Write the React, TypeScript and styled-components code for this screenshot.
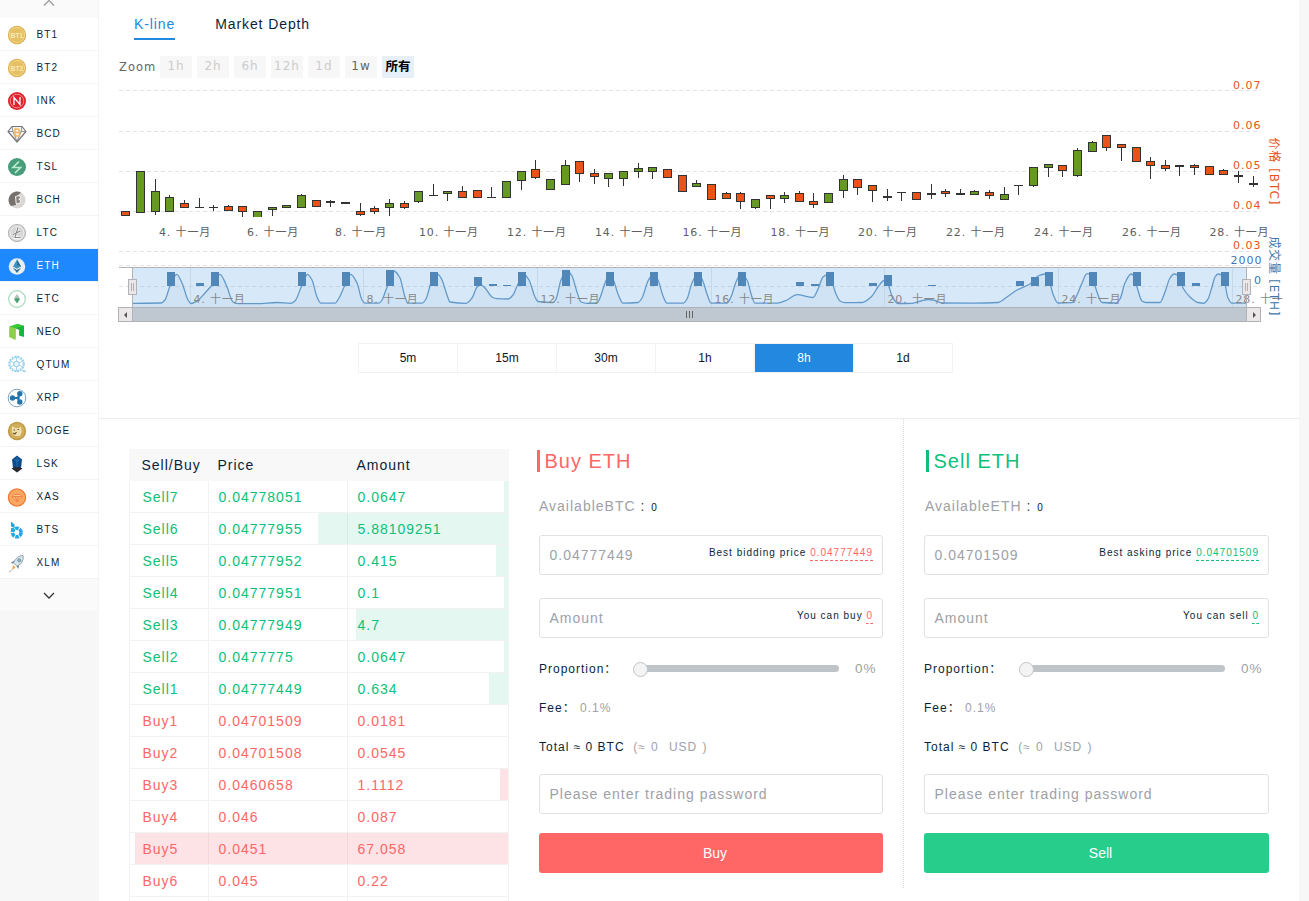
import React from "react";
import styled, { createGlobalStyle, css } from "styled-components";

const GREEN = "#0cc07a";
const RED = "#ff6666";
const BLUE = "#2288e0";

const GlobalStyle = createGlobalStyle`
  * { box-sizing: border-box; }
  body {
    margin: 0;
    background: #f7f7f7;
    color: #0b1f3a;
    font-family: "Liberation Sans", "Noto Sans CJK SC", sans-serif;
    letter-spacing: 1px;
  }
`;

const Page = styled.div`
  display: flex;
  width: 1309px;
  height: 901px;
  overflow: hidden;
`;

/* ---------- sidebar ---------- */

const Sidebar = styled.nav`
  width: 99px;
  flex: none;
`;

const SidebarList = styled.div`
  border-right: 1px solid #f4f4f4;
  background: #fff;
`;

const ScrollCell = styled.div<{ $top?: boolean }>`
  height: ${(p) => (p.$top ? 18 : 32)}px;
  background: #fafafa;
  display: flex;
  justify-content: center;
  align-items: ${(p) => (p.$top ? "flex-start" : "center")};
  svg { display: block; }
`;

const CoinRow = styled.div<{ $active?: boolean }>`
  height: 33px;
  padding: 1px 0 0 7px;
  display: flex;
  align-items: center;
  gap: 9.500px;
  font-size: 10px;
  letter-spacing: 1.1px;
  background: #fff;
  border-bottom: 1px solid #f4f4f4;
  ${(p) =>
    p.$active &&
    css`
      background: #1e88ff;
      background-clip: padding-box;
      color: #fff;
    `}
  svg { flex: none; }
`;

const gold = (label: string) => (
  <>
    <circle cx="10" cy="10" r="9.2" fill="#dfb04c" />
    <circle cx="10" cy="10" r="7.6" fill="#e5c164" stroke="#f1d88c" strokeWidth="1" />
    <text x="10" y="12.5" fontSize="6.500" fontWeight="700" textAnchor="middle" letterSpacing="0" fill="#f8e9b8">{label}</text>
  </>
);

const coinArt: Record<string, React.ReactNode> = {
  BT1: gold("BT1"),
  BT2: gold("BT2"),
  INK: (
    <>
      <circle cx="10" cy="10" r="9" fill="#e0202b" />
      <circle cx="10" cy="10" r="6.8" fill="none" stroke="#f7b6b8" strokeWidth=".7" />
      <path d="M7 14V6.500l6 7V6" stroke="#fff" strokeWidth="1.3" fill="none" />
    </>
  ),
  BCD: (
    <>
      <path d="M5 2.5h10l4 5-9 10.5L1 7.500z" fill="#f5f5f5" stroke="#777" strokeWidth="1.2" strokeLinejoin="round" />
      <path d="M1 7.500h5l4 10 4-10h5M6 7.500L5 2.500M14 7.500l1-5" stroke="#777" strokeWidth=".8" fill="none" />
      <path d="M8 5h2.500q1.800 0 1.800 1.700T10.500 8.500H8zM8 8.500h3q1.800 0 1.800 1.700T11 12H8z" fill="none" stroke="#f3b25a" strokeWidth="1.400" />
    </>
  ),
  TSL: (
    <>
      <circle cx="10" cy="10" r="9" fill="#479d79" />
      <path d="M12 4.500L6 10.500h7.500L8 16" stroke="#b7ecd0" strokeWidth="1.700" fill="none" />
    </>
  ),
  BCH: (
    <>
      <circle cx="10" cy="10" r="8.500" fill="#d9d6d4" />
      <path d="M4 16A8.500 8.500 0 0 1 14 2.500L11 5 9 15z" fill="#77716e" />
      <path d="M8.500 6.500l3-.8q2 0 2 1.600t-1.700 2q2 .3 1.900 2T11.500 13.500l-2.300.5z" fill="#8b8683" stroke="#fff" strokeWidth=".9" />
    </>
  ),
  LTC: (
    <>
      <circle cx="10" cy="10" r="8.600" fill="#d6d6d6" stroke="#a5a5a5" strokeWidth=".8" />
      <circle cx="10" cy="10" r="6.800" fill="none" stroke="#f1f1f1" strokeWidth=".8" />
      <path d="M11 4.500L8 14.500h5.500M6 11.500l7.500-3.500" stroke="#fff" strokeWidth="2.400" fill="none" />
      <path d="M11 4.500L8 14.500h5.500M6 11.500l7.500-3.500" stroke="#888" strokeWidth="1.100" fill="none" />
    </>
  ),
  ETH: (
    <>
      <circle cx="10" cy="10.500" r="8.300" fill="#e8edf0" />
      <path d="M10 3.500l4 7-4 2.300-4-2.300z" fill="#4492b8" />
      <path d="M10 3.500l4 7-4-1.600zM6 11.700l4 2.300 4-2.300-4 5.300z" fill="#2a6d94" />
    </>
  ),
  ETC: (
    <>
      <circle cx="10" cy="10" r="8.300" fill="#fff" stroke="#a4d8b8" strokeWidth="1.200" />
      <path d="M10 5l3 4.300L10 11 7 9.300z" fill="#b5c2b9" />
      <path d="M7 10l3-1 3 1-3 4.500z" fill="#4aa06e" />
    </>
  ),
  NEO: (
    <>
      <path d="M2.500 4.500l8-2.800 6.500 2v11l-5-1.500V7.500L8.500 6.200v10.500L2.500 15z" fill="#38c934" />
      <path d="M2.500 4.500l6 1.700v12L2.500 15z" fill="#8fd04a" />
      <path d="M8.500 6.200l8.500-2.500v11l-4.500-1V8z" fill="#12b83c" />
    </>
  ),
  QTUM: (
    <>
      <circle cx="9.500" cy="9" r="7.500" fill="none" stroke="#8ccbe4" strokeWidth="1.400" strokeDasharray="2 1" />
      <path d="M3 6l6.500-4L16 6v6l-6.500 4L3 12zM3 6l13 6M16 6L3 12M9.500 2v14" stroke="#9dd3e8" strokeWidth=".9" fill="none" />
      <circle cx="9.500" cy="9" r="2.800" fill="#e9f6fb" stroke="#8ccbe4" />
      <path d="M15.500 15.500l3 1" stroke="#8ccbe4" strokeWidth="1.500" />
    </>
  ),
  XRP: (
    <>
      <circle cx="10" cy="10" r="8.800" fill="#fff" stroke="#7fa3c4" strokeWidth="1" />
      <path d="M6 10h5l2-4.500M11 10l2 4.500" stroke="#2274ab" strokeWidth="1.800" fill="none" />
      <circle cx="5.500" cy="10" r="2.700" fill="#2274ab" />
      <circle cx="12.800" cy="5.800" r="2.700" fill="#2274ab" />
      <circle cx="12.800" cy="14" r="2.700" fill="#2274ab" />
      <circle cx="11" cy="10" r="1.700" fill="#2274ab" />
    </>
  ),
  DOGE: (
    <>
      <circle cx="10" cy="10" r="9.200" fill="#bf9a45" />
      <circle cx="10" cy="10" r="7.700" fill="#d1ae5c" />
      <path d="M5 5l3 2h4l2-1 .7 5-1.700 4H8l-3-3z" fill="#f0dfae" />
      <path d="M6.500 9h1.500M10.500 8.500H12M6 12l2 1 1.500-2" stroke="#69501f" strokeWidth="1.200" fill="none" />
    </>
  ),
  LSK: (
    <>
      <path d="M10 1.500l5 4-1 8.500H6L5 5.500z" fill="#0d4a8c" />
      <path d="M10 3v11M7.500 5l2.500 3 2.500-3" stroke="#1d6fb0" strokeWidth="1.100" fill="none" />
      <path d="M4.500 14.500L8 13h4l3.500 1.500L10 18.500z" fill="#2b2b33" />
    </>
  ),
  XAS: (
    <>
      <circle cx="10" cy="10.500" r="8.600" fill="#f9a862" stroke="#f07a35" strokeWidth="1.300" />
      <path d="M7 7.500h6L15 9.500 10 15 5 9.500zM5 9.500h10M8 9.500l2 5 2-5" stroke="#f0763c" strokeWidth=".8" fill="#fcc38d" />
    </>
  ),
  BTS: (
    <>
      <path d="M4 1.500l3.500 3v3.500L4 6.500zM4 8l3.500.5v3L4 11z" fill="#1ba5e5" />
      <circle cx="9.800" cy="12.500" r="4.300" fill="none" stroke="#1eaae8" strokeWidth="3.600" strokeDasharray="3.600 .9" />
    </>
  ),
  XLM: (
    <>
      <path d="M16 2.500q-6 0-9.500 7L10 13.500q6-3 6.300-8z" fill="#dbe6ec" stroke="#879aa6" strokeWidth=".9" />
      <circle cx="12.200" cy="7.300" r="1.600" fill="#90b9cf" stroke="#60798a" strokeWidth=".6" />
      <path d="M7.500 7.500L4 9.500l2 1.500zM12 12l-.5 4-2-2.500z" fill="#6f8794" />
      <path d="M6 12l2.500 2.500L5 17z" fill="#f2a24a" />
      <path d="M2 19l3-2" stroke="#ccc" strokeWidth="1.500" />
    </>
  ),
};

/* ---------- market / chart ---------- */

const Main = styled.main`
  width: 1200px;
  flex: none;
  background: #fff;
`;

const Market = styled.section`
  height: 419px;
  border-bottom: 1px solid #ececec;
`;

const Tabs = styled.div`
  display: flex;
  gap: 40px;
  padding: 8px 0 0 35px;
`;

const Tab = styled.div<{ $active?: boolean }>`
  height: 32px;
  line-height: 32px;
  font-size: 14px;
  letter-spacing: 0.9px;
  color: ${(p) => (p.$active ? BLUE : "inherit")};
  border-bottom: 2px solid ${(p) => (p.$active ? BLUE : "transparent")};
`;

const ZoomRow = styled.div`
  display: flex;
  gap: 5px;
  padding: 16px 0 0 20px;
  height: 40px;
  font-family: "DejaVu Sans", "Noto Sans CJK SC", sans-serif;
`;

const ZoomLabel = styled.span`
  width: 36px;
  font-size: 11.500px;
  line-height: 22px;
  color: #666;
`;

const ZoomButton = styled.span<{ $state?: "on" | "off" }>`
  width: 32px;
  height: 22px;
  line-height: ${(p) => (p.$state === "on" ? 22 : 20)}px;
  text-align: center;
  font-size: ${(p) => (p.$state === "on" ? 12.5 : 12)}px;
  background: ${(p) => (p.$state === "on" ? "#e7f0f9" : "#f7f7f7")};
  color: ${(p) => (p.$state === "on" ? "#000" : p.$state === "off" ? "#ccc" : "#666")};
  font-weight: ${(p) => (p.$state === "on" ? 700 : 400)};
  letter-spacing: ${(p) => (p.$state === "on" ? 0 : 1)}px;
`;

const ChartSvg = styled.svg`
  display: block;
  font-family: "DejaVu Sans", "Noto Sans CJK SC", sans-serif;
  font-size: 11px;
  letter-spacing: 1px;
`;

const Intervals = styled.div`
  display: flex;
  width: 595px;
  height: 30px;
  margin: 13px 0 0 259px;
  border: 1px solid #f2f2f2;
`;

const Interval = styled.div<{ $active?: boolean }>`
  flex: 1;
  line-height: 28px;
  text-align: center;
  font-size: 12px;
  letter-spacing: 0;
  color: ${(p) => (p.$active ? "#fff" : "#0b1626")};
  background: ${(p) => (p.$active ? BLUE : "transparent")};
  border-right: 1px solid #f2f2f2;
  &:last-child { border-right: 0; }
`;

type Candle = [string, number, number, number, number];

// kind, wick top, body top, body bottom, wick bottom
const candles: Candle[] = [
  ["R", 211, 211, 216, 216], ["G", 171, 171, 213, 213], ["G", 179, 191, 212, 215], ["G", 195, 197, 212, 212],
  ["R", 200, 203, 208, 208], ["D", 198, 207, 208, 208], ["D", 205, 207, 208, 211], ["R", 205, 206, 211, 211],
  ["R", 206, 206, 212, 217], ["G", 211, 211, 219, 219], ["G", 207, 207, 210, 216], ["G", 205, 205, 208, 208],
  ["G", 194, 195, 208, 208], ["R", 200, 200, 207, 207], ["D", 200, 201, 203, 207], ["D", 202, 202, 204, 204],
  ["R", 203, 211, 215, 216], ["R", 206, 208, 212, 214], ["G", 199, 203, 208, 216], ["R", 201, 203, 208, 209],
  ["G", 191, 191, 202, 203], ["D", 184, 195, 196, 196], ["G", 191, 191, 194, 201], ["R", 186, 191, 198, 198],
  ["R", 190, 190, 198, 198], ["D", 187, 197, 198, 198], ["G", 181, 181, 198, 198], ["G", 171, 171, 181, 190],
  ["R", 160, 169, 178, 179], ["G", 179, 179, 190, 190], ["G", 160, 165, 185, 185], ["R", 161, 161, 174, 182],
  ["R", 169, 173, 177, 184], ["G", 173, 173, 179, 187], ["G", 171, 171, 179, 186], ["G", 163, 168, 172, 178],
  ["G", 167, 167, 172, 179], ["R", 169, 169, 178, 178], ["R", 175, 175, 192, 192], ["G", 180, 183, 187, 187],
  ["R", 184, 184, 200, 200], ["R", 192, 193, 199, 199], ["R", 192, 193, 202, 209], ["G", 199, 199, 208, 209],
  ["R", 195, 195, 199, 209], ["G", 192, 195, 199, 203], ["R", 191, 193, 202, 202], ["R", 193, 201, 205, 208],
  ["G", 193, 193, 203, 203], ["G", 175, 179, 191, 198], ["R", 179, 179, 188, 195], ["R", 185, 185, 191, 202],
  ["D", 189, 196, 198, 201], ["D", 192, 192, 193, 201], ["R", 192, 192, 200, 200], ["D", 184, 193, 195, 199],
  ["R", 189, 191, 194, 197], ["D", 189, 193, 195, 195], ["G", 190, 191, 195, 195], ["R", 190, 192, 196, 199],
  ["G", 187, 194, 200, 200], ["D", 185, 185, 186, 195], ["G", 167, 167, 186, 187], ["G", 164, 164, 168, 177],
  ["R", 165, 165, 171, 177], ["G", 148, 150, 176, 177], ["G", 141, 142, 152, 152], ["R", 135, 135, 148, 151],
  ["R", 144, 144, 148, 161], ["R", 147, 147, 162, 162], ["R", 157, 161, 166, 179], ["R", 160, 165, 169, 171],
  ["D", 165, 165, 167, 176], ["R", 164, 165, 168, 175], ["R", 166, 166, 175, 175], ["R", 169, 170, 175, 175],
  ["D", 171, 175, 177, 183], ["D", 176, 183, 185, 187],
];

const volumes: [number, number][] = [
  [167, 272], [196, 283], [211, 272], [298, 272], [342, 272], [386, 270], [430, 272], [474, 277], [489, 284],
  [503, 285], [518, 272], [562, 270], [606, 272], [650, 272], [694, 272], [738, 272], [796, 282], [811, 284],
  [826, 272], [869, 283], [884, 275], [928, 285], [1016, 281], [1031, 277], [1045, 272], [1089, 272],
  [1133, 272], [1177, 272], [1192, 283], [1221, 272],
];

const overview: [number, number][] = [
  [133, 303.3], [161, 303], [165, 300], [170, 286], [176.7, 274.3], [182, 283], [188, 300], [191, 303.5], [197, 301],
  [205, 293], [212, 285], [220, 274.3], [227, 287], [233, 302], [238, 303.7], [257, 303.7], [277, 302.5], [291, 303.3],
  [295, 301], [302, 285], [307.500, 274.3], [312, 280], [317, 297], [321, 303.2], [335, 303.2], [339, 298], [345, 285],
  [350.700, 274.3], [357, 283], [362, 300], [365, 303.2], [379, 303.2], [382, 300], [386, 290], [394, 271], [400, 278],
  [405, 297], [408, 303.2], [422, 303.2], [426, 299], [432, 280], [438, 274.3], [442, 280], [447, 295], [450, 302],
  [466, 303.3], [472, 298], [477, 287], [480, 284.500], [485, 288], [492, 297], [497, 298.700], [508, 299], [513, 295],
  [518, 284], [524, 274.300], [529, 280], [535, 297], [538, 301.500], [553, 302.500], [556, 299], [561, 280], [567, 270.500],
  [572, 276], [577, 292], [581, 302], [587, 303.300], [597, 303], [600, 298], [605, 283], [609.500, 274.500], [613, 279],
  [618, 294], [623, 303.200], [638, 302.500], [642, 298], [648, 281], [653, 274.300], [658, 280], [663, 296], [667, 303.200],
  [683, 303.200], [687, 299], [692, 283], [697.500, 274.300], [702, 279], [707, 294], [711, 303.200], [727, 303.200],
  [731, 297], [736, 282], [741, 274], [747, 280], [752, 297], [755, 303.200], [777, 303.200], [787, 300], [797, 294.700],
  [813, 297.500], [818, 289], [823, 277], [828, 274.300], [832, 282], [836, 294], [840, 301], [845, 302.700], [862, 302.500],
  [872, 296], [878, 287], [884, 280.500], [888, 284], [892, 296], [898, 303.500], [912, 303.300], [921, 301], [928, 299.500],
  [935, 300.500], [942, 303], [973, 303.200], [998, 302.500], [1007, 297], [1017, 290], [1030, 284], [1038, 276],
  [1045, 274], [1049, 280], [1053, 294], [1058, 303], [1072, 302.700], [1077, 295], [1082, 283], [1087, 273.700],
  [1092, 274.500], [1096, 289], [1102, 302.500], [1116, 303], [1120, 299], [1125, 283], [1131, 274], [1134, 276],
  [1137, 287], [1142, 301], [1146, 302.500], [1160, 302.500], [1165, 292], [1170, 278], [1174, 274], [1179, 276],
  [1183, 288], [1190, 297], [1198, 302.500], [1204, 303.300], [1208, 299], [1212, 287], [1215, 277], [1218, 274],
  [1223, 276], [1228, 298], [1232, 303.200], [1246, 303.200],
];

// Monotone cubic interpolation through the points
function smoothPath(pts: [number, number][]) {
  const slope = (i: number) => (pts[i + 1][1] - pts[i][1]) / (pts[i + 1][0] - pts[i][0]);
  const tangent = (i: number) => {
    if (i === 0 || i === pts.length - 1) return 0;
    const a = slope(i - 1);
    const b = slope(i);
    return a * b <= 0 ? 0 : (2 * a * b) / (a + b);
  };
  let d = `M${pts[0][0]} ${pts[0][1]}`;
  for (let i = 0; i < pts.length - 1; i++) {
    const [x0, y0] = pts[i];
    const [x1, y1] = pts[i + 1];
    const h = (x1 - x0) / 3;
    d += `C${x0 + h} ${y0 + tangent(i) * h} ${x1 - h} ${y1 - tangent(i + 1) * h} ${x1} ${y1}`;
  }
  return d;
}

const dayLabels: [number, number][] = [
  [4, 159], [6, 247], [8, 335], [10, 419], [12, 507], [14, 595], [16, 682.500], [18, 770.500], [20, 858], [22, 946],
  [24, 1034], [26, 1122], [28, 1209.500],
];

const overviewLabels: [number, number][] = [
  [4, 190], [8, 363], [12, 537], [16, 711], [20, 884], [24, 1058], [28, 1232],
];

const PriceChart = () => {
  const line = smoothPath(overview);
  return (
    <ChartSvg width="1200" height="250" viewBox="99 80 1200 250">
      <defs>
        <clipPath id="plot"><rect x="119" y="80" width="1142" height="137" /></clipPath>
        <clipPath id="overviewText"><rect x="119" y="280" width="1164" height="30" /></clipPath>
      </defs>

      {[90.5, 131.5, 171.5, 211.5, 251.5, 265.5, 286.5].map((y) => (
        <path key={y} d={`M119 ${y}H1261`} stroke="#e2e2e2" strokeDasharray="4 3" />
      ))}

      <g clipPath="url(#plot)" stroke="#333">
        {candles.map(([kind, wt, top, bottom, wb], i) => {
          const x = Math.floor(125.85 + i * 14.64) + 0.5;
          const flat = kind === "D";
          return (
            <g key={i}>
              {wt < top && <path d={`M${x} ${wt}V${top}`} />}
              {wb > bottom && <path d={`M${x} ${bottom}V${wb}`} />}
              {flat ? (
                <rect x={x - 4.5} y={top} width="9" height={bottom - top} fill="#333" stroke="none" />
              ) : (
                <rect x={x - 4} y={top + 0.5} width="8" height={bottom - top - 1} fill={kind === "G" ? "#669922" : "#e95318"} />
              )}
            </g>
          );
        })}
      </g>

      <g fill="#606060" letterSpacing="0.85">
        {dayLabels.map(([day, x]) => (
          <text key={day} x={x} y="236">{day}. 十一月</text>
        ))}
      </g>

      <rect x="133" y="268" width="1113" height="39" fill="#7cb5ec" fillOpacity=".3" />
      <path d={`${line}V307H133Z`} fill="#4f86b9" fillOpacity=".06" />
      <g stroke="#c6d8e8">
        {overviewLabels.map(([day, x]) => <path key={day} d={`M${x + 0.5} 268V307`} />)}
      </g>
      <path d={line} fill="none" stroke="#6399c9" strokeWidth="1.300" />
      {volumes.map(([x, y]) => (
        <rect key={x} x={x} y={y} width="8" height={286 - y} fill="#5087b8" />
      ))}
      <g fill="#888" letterSpacing="0.85" clipPath="url(#overviewText)">
        {overviewLabels.map(([day, x]) => (
          <text key={day} x={x + 3.500} y="303">{day}. 十一月</text>
        ))}
      </g>
      <path d="M119 267.500H1261M132.500 267V307M1246.500 267V307" stroke="#b2b1b6" fill="none" />
      {[128.5, 1242.5].map((x) => (
        <g key={x} stroke="#b2b1b6">
          <rect x={x} y="279.500" width="8" height="15" fill="#ebe7e8" />
          <path d={`M${x + 3} 283V291M${x + 5} 283V291`} />
        </g>
      ))}

      <rect x="118.500" y="307.500" width="1142" height="14" fill="#bfc8d1" stroke="#b2b1b6" />
      <rect x="118.500" y="307.500" width="14" height="14" fill="#ebe7e8" stroke="#b2b1b6" />
      <rect x="1246.500" y="307.500" width="14" height="14" fill="#ebe7e8" stroke="#b2b1b6" />
      <path d="M127 312v6l-3-3zM1253 312v6l3-3z" fill="#555" />
      <path d="M686.500 311v7M689.500 311v7M692.500 311v7" stroke="#666" />

      <g fill="#e8541a">
        {["0.07", "0.06", "0.05", "0.04", "0.03"].map((value, i) => (
          <text key={value} x="1233" y={89 + i * 40}>{value}</text>
        ))}
      </g>
      <g fill="#4076aa">
        <text x="1230.500" y="264">2000</text>
        <text x="1254" y="284">0</text>
      </g>
      <text transform="translate(1269.500 137.500) rotate(90)" fontSize="12" textLength="68" fill="#e8541a">价格 [BTC]</text>
      <text transform="translate(1269.500 236.500) rotate(90)" fontSize="12" textLength="80" fill="#4076aa">成交量 [ETH]</text>
    </ChartSvg>
  );
};

/* ---------- order book ---------- */

const Trade = styled.section`
  display: flex;
  height: 482px;
`;

const Book = styled.div`
  width: 380px;
  flex: none;
  margin: 30px 0 0 30px;
  font-size: 14px;
`;

const bookColumns = css`
  display: grid;
  grid-template-columns: 79px 139px 161px;
`;

const BookHead = styled.div`
  ${bookColumns}
  height: 32px;
  line-height: 32px;
  padding-left: 1px;
  background: #f8f8f8;
  span { padding-left: 8.500px; }
  span:first-child { padding-left: 11.500px; white-space: nowrap; }
`;

const BookRow = styled.div<{ $sell: boolean; $depth: number }>`
  ${bookColumns}
  height: 32px;
  color: ${(p) => (p.$sell ? GREEN : RED)};
  border-left: 1px solid #f2f2f2;
  border-bottom: 1px solid #f2f2f2;
  background: linear-gradient(${(p) => (p.$sell ? "#e4f7f0, #e4f7f0" : "#fde3e5, #fde3e5")}) right 1px top / ${(p) => p.$depth}px 100% no-repeat;
  span {
    height: 31px;
    line-height: 33px;
    padding-left: 9.500px;
    border-right: 1px solid rgba(0, 0, 0, 0.05);
  }
  span:first-child { padding-left: 12.500px; }
`;

const orders: [string, string, string, number][] = [
  ["Sell7", "0.04778051", "0.0647", 4],
  ["Sell6", "0.04777955", "5.88109251", 190],
  ["Sell5", "0.04777952", "0.415", 12],
  ["Sell4", "0.04777951", "0.1", 4],
  ["Sell3", "0.04777949", "4.7", 152],
  ["Sell2", "0.0477775", "0.0647", 4],
  ["Sell1", "0.04777449", "0.634", 19],
  ["Buy1", "0.04701509", "0.0181", 0],
  ["Buy2", "0.04701508", "0.0545", 0],
  ["Buy3", "0.0460658", "1.1112", 8],
  ["Buy4", "0.046", "0.087", 0],
  ["Buy5", "0.0451", "67.058", 373],
  ["Buy6", "0.045", "0.22", 0],
  ["", "", "", 0],
];

/* ---------- order forms ---------- */

const Form = styled.div<{ $side: "buy" | "sell" }>`
  flex: none;
  height: 469px;
  width: 395px;
  padding: ${(p) => (p.$side === "buy" ? "31px 20px 0 30px" : "31px 30px 0 20px")};
  border-right: ${(p) => (p.$side === "buy" ? "1px dotted #d8d8d8" : "0")};
  --tone: ${(p) => (p.$side === "buy" ? RED : GREEN)};
`;

const Title = styled.h2<{ $shift: number }>`
  margin: 0 0 0 ${(p) => p.$shift}px;
  padding-left: 4.500px;
  height: 22px;
  line-height: 22px;
  border-left: 3px solid var(--tone);
  color: var(--tone);
  font-size: 20px;
  font-weight: 400;
`;

const Available = styled.div<{ $shift: number }>`
  margin: 24px 0 19px ${(p) => p.$shift}px;
  height: 20px;
  line-height: 20px;
  font-size: 14px;
  color: #9da1a8;
  b { font-weight: 400; color: #444; }
  small { margin-left: 1px; font-size: 10px; color: #0b1626; }
`;

const Field = styled.div<{ $gap: number }>`
  height: 40px;
  margin-bottom: ${(p) => p.$gap}px;
  padding: 0 9px 0 9.500px;
  display: flex;
  justify-content: space-between;
  align-items: center;
  border: 1px solid #e2e2e6;
  border-radius: 3px;
  font-size: 14px;
  color: #9da1a8;
`;

const Hint = styled.span`
  margin-top: -2px;
  font-size: 10px;
  color: #0b1f3a;
  em {
    display: inline-block;
    height: 14px;
    font-style: normal;
    color: var(--tone);
    border-bottom: 1px dashed var(--tone);
  }
`;

const Line = styled.div<{ $after?: number }>`
  height: 39px;
  margin-bottom: ${(p) => p.$after ?? 0}px;
  display: flex;
  align-items: center;
  font-size: 12px;
  white-space: pre;
  i { font-style: normal; color: #9da1a8; word-spacing: 0.8px; }
`;

const Slider = styled.div`
  width: 199px;
  height: 7px;
  margin-left: 22px;
  display: flex;
  align-items: center;
  border-radius: 4px;
  background: #bfc4c8;
`;

const Knob = styled.span`
  width: 15px;
  height: 15px;
  margin: 1px 0 0 -7px;
  border: 1px solid #bfc4c8;
  border-radius: 50%;
  background: #f4f4f4;
`;

const Percent = styled.span`
  margin-left: 16px;
  font-size: 13.500px;
  color: #9da1a8;
`;

const Label = styled.span<{ $w: number }>`
  width: ${(p) => p.$w}px;
  margin-top: -2px;
`;

const Submit = styled.button`
  display: block;
  width: 100%;
  height: 40px;
  padding: 0 0 0 8px;
  border: 0;
  border-radius: 3px;
  background: ${(p) => p.color};
  color: #fff;
  font: 14px "Liberation Sans", sans-serif;
`;

const OrderForm = ({ side }: { side: "buy" | "sell" }) => {
  const buy = side === "buy";
  return (
    <Form $side={side}>
      <Title $shift={buy ? -2 : 2}>{buy ? "Buy ETH" : "Sell ETH"}</Title>
      <Available $shift={buy ? 0 : 1}>
        Available{buy ? "BTC" : "ETH"} <b>:</b> <small>0</small>
      </Available>
      <Field $gap={23}>
        {buy ? "0.04777449" : "0.04701509"}
        <Hint>
          {buy ? "Best bidding price " : "Best asking price "}
          <em>{buy ? "0.04777449" : "0.04701509"}</em>
        </Hint>
      </Field>
      <Field $gap={11}>
        Amount
        <Hint>
          {buy ? "You can buy " : "You can sell "}
          <em>0</em>
        </Hint>
      </Field>
      <Line>
        <Label $w={buy ? 79 : 80}>Proportion：</Label>
        <Slider><Knob /></Slider>
        <Percent>0%</Percent>
      </Line>
      <Line>
        <Label $w={41}>Fee：</Label>
        <i>0.1%</i>
      </Line>
      <Line $after={8}>Total ≈ 0 BTC  <i>(≈ 0  USD )</i></Line>
      <Field $gap={19}>Please enter trading password</Field>
      <Submit color={buy ? "#ff6666" : "#27cd8b"}>{buy ? "Buy" : "Sell"}</Submit>
    </Form>
  );
};

export default function App() {
  return (
    <Page>
      <GlobalStyle />
      <Sidebar>
        <SidebarList>
          <ScrollCell $top>
            <svg width="12" height="7" viewBox="0 0 12 7">
              <path d="M1 5.500L6 .5l5 5" fill="none" stroke="#999" strokeWidth="1.200" />
            </svg>
          </ScrollCell>
          {Object.keys(coinArt).map((coin) => (
            <CoinRow key={coin} $active={coin === "ETH"}>
              <svg width="20" height="20" viewBox="0 0 20 20">{coinArt[coin]}</svg>
              {coin}
            </CoinRow>
          ))}
          <ScrollCell>
            <svg width="12" height="7" viewBox="0 0 12 7">
              <path d="M1 1l5 5 5-5" fill="none" stroke="#333" strokeWidth="1.300" />
            </svg>
          </ScrollCell>
        </SidebarList>
      </Sidebar>

      <Main>
        <Market>
          <Tabs>
            <Tab $active>K-line</Tab>
            <Tab>Market Depth</Tab>
          </Tabs>
          <ZoomRow>
            <ZoomLabel>Zoom</ZoomLabel>
            {["1h", "2h", "6h", "12h", "1d"].map((z) => (
              <ZoomButton key={z} $state="off">{z}</ZoomButton>
            ))}
            <ZoomButton>1w</ZoomButton>
            <ZoomButton $state="on">所有</ZoomButton>
          </ZoomRow>
          <PriceChart />
          <Intervals>
            {["5m", "15m", "30m", "1h", "8h", "1d"].map((t) => (
              <Interval key={t} $active={t === "8h"}>{t}</Interval>
            ))}
          </Intervals>
        </Market>

        <Trade>
          <Book>
            <BookHead>
              <span>Sell/Buy</span>
              <span>Price</span>
              <span>Amount</span>
            </BookHead>
            {orders.map(([name, price, amount, depth], i) => (
              <BookRow key={i} $sell={name.startsWith("Sell")} $depth={depth}>
                <span>{name}</span>
                <span>{price}</span>
                <span>{amount}</span>
              </BookRow>
            ))}
          </Book>
          <OrderForm side="buy" />
          <OrderForm side="sell" />
        </Trade>
      </Main>
    </Page>
  );
}
